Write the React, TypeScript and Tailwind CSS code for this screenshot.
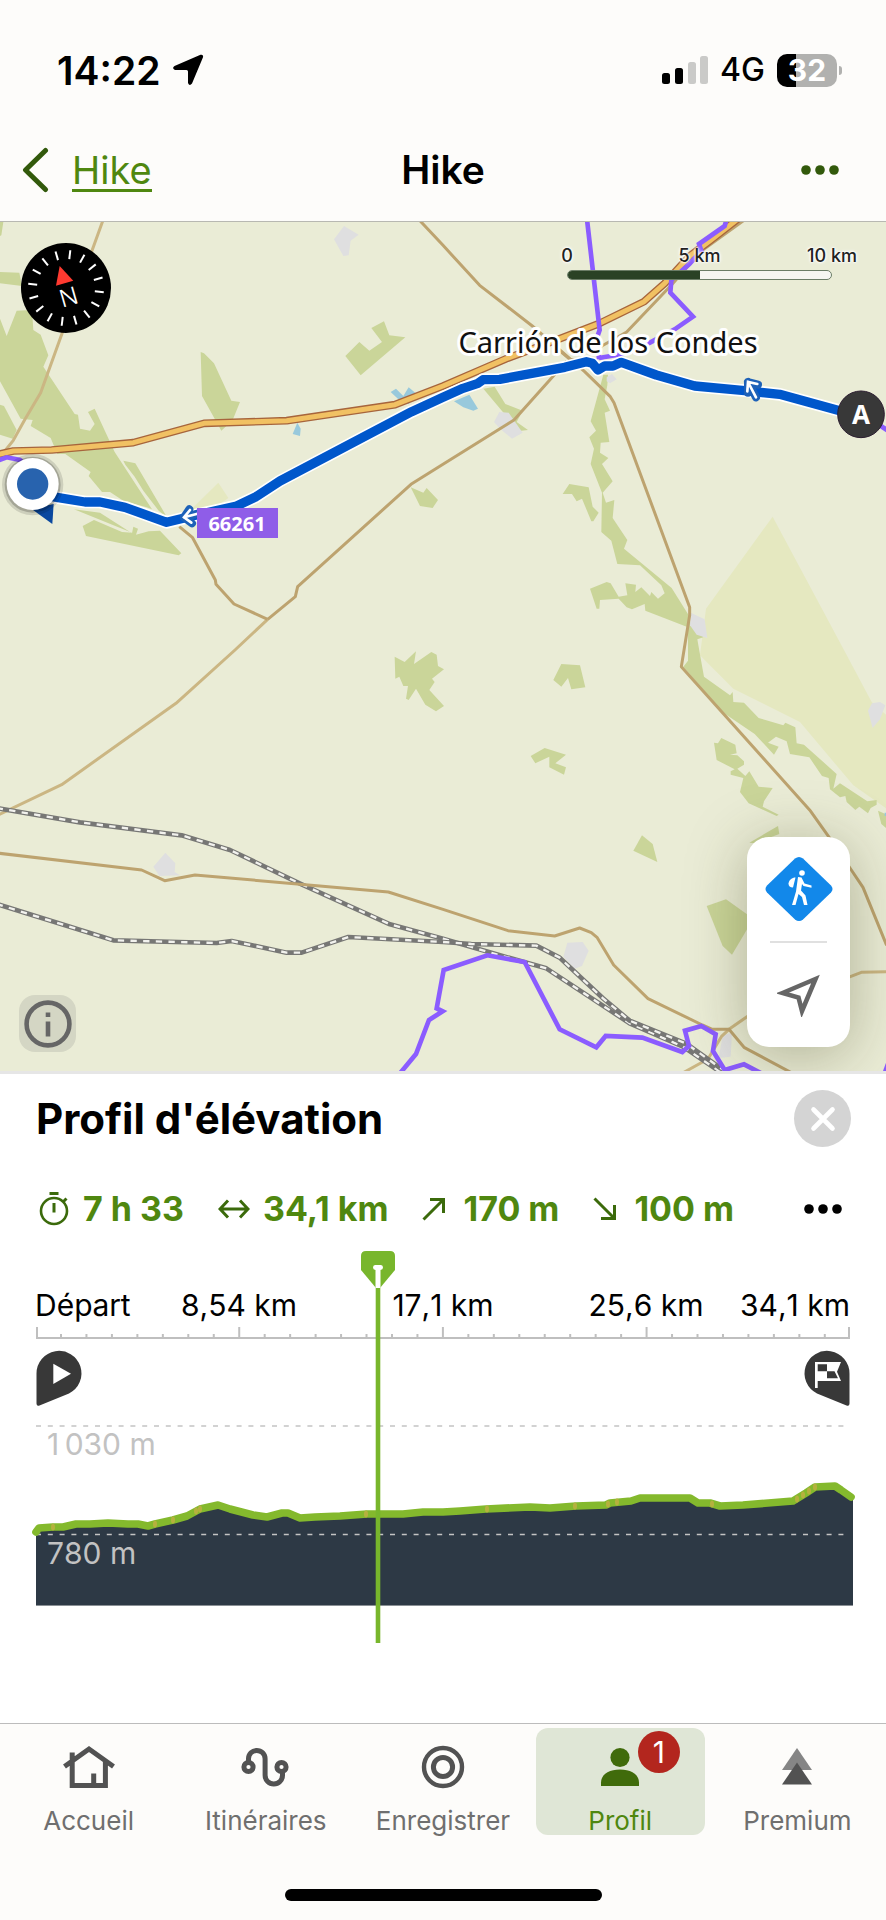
import type { ReactNode } from 'react';

interface Stat {
  label: string;
  value: string;
  icon: ReactNode;
}

interface Tab {
  label: string;
  icon: ReactNode;
  active?: boolean;
  badge?: number;
}

const STATS: Stat[] = [
  {
    label: 'Durée',
    value: '7 h 33',
    icon: (
      <svg viewBox="0 0 30 36" className="mr-[14px] h-9 w-[30px]" fill="none" stroke="#3b6a0b">
        <circle cx="15" cy="20" r="13" strokeWidth="2.6" />
        <path d="M10.500 2.600H19.500M15 12V21.500M24.500 10.500L27.500 7.500" strokeWidth="3" />
      </svg>
    ),
  },
  {
    label: 'Distance',
    value: '34,1 km',
    icon: (
      <svg viewBox="0 0 32 24" className="mr-[13px] h-6 w-8" fill="none" stroke="#3b6a0b" strokeWidth="3">
        <path d="M2 12H30M10 3.500L2 12L10 20.500M22 3.500L30 12L22 20.500" />
      </svg>
    ),
  },
  {
    label: 'Montée',
    value: '170 m',
    icon: (
      <svg viewBox="0 0 24 24" className="mr-[17px] size-6" fill="none" stroke="#3b6a0b" strokeWidth="3">
        <path d="M1.500 22.500L21.500 2.500M8 2.500H21.500V16" />
      </svg>
    ),
  },
  {
    label: 'Descente',
    value: '100 m',
    icon: (
      <svg viewBox="0 0 24 24" className="mr-[17px] size-6" fill="none" stroke="#3b6a0b" strokeWidth="3">
        <path d="M1.500 1.500L21.500 21.500M21.500 8V21.500H8" />
      </svg>
    ),
  },
];

const TABS: Tab[] = [
  {
    label: 'Accueil',
    icon: (
      <svg viewBox="0 0 52 44" className="h-11 w-[52px]" fill="none" stroke="#525252" strokeWidth="5">
        <path d="M1.500 21.500L26 4L50.500 21.500M9.200 7.500V40.500H42.400V16M30.700 40V28.500" />
      </svg>
    ),
  },
  {
    label: 'Itinéraires',
    icon: (
      <svg viewBox="0 0 52 44" className="h-11 w-[52px]" fill="none" stroke="#525252" strokeWidth="5">
        <circle cx="8.500" cy="22" r="4.600" />
        <circle cx="41.500" cy="22" r="4.600" />
        <path d="M8.500 17V13.700A8.300 8.300 0 0 1 25.100 13.700V30.300A8.700 8.700 0 0 0 42.500 30.300V27" />
      </svg>
    ),
  },
  {
    label: 'Enregistrer',
    icon: (
      <svg viewBox="0 0 52 44" className="h-11 w-[52px]" fill="none" stroke="#525252" strokeWidth="4.400">
        <circle cx="26" cy="22" r="19" />
        <circle cx="26" cy="22" r="9.600" strokeWidth="5" />
      </svg>
    ),
  },
  {
    label: 'Profil',
    active: true,
    badge: 1,
    icon: (
      <svg viewBox="0 0 52 44" className="h-11 w-[52px]" fill="#406b0b">
        <circle cx="26" cy="12.500" r="9.600" />
        <path d="M7 41V37.500C7 29.500 15 24.500 26 24.500C37 24.500 45 29.500 45 37.500V41Z" />
      </svg>
    ),
  },
  {
    label: 'Premium',
    icon: (
      <svg viewBox="0 0 52 44" className="h-11 w-[52px]">
        <path d="M26 3L41 25H11Z" fill="#858585" />
        <path d="M26 17.500L41 39.500H11Z" fill="#525252" />
      </svg>
    ),
  },
];

// Elevation samples in chart units, left to right
const PROFILE =
  '36,282 39,278 53,277 63,277 76,274 90,274 108,273 128,274 138,274 148,276 155,274 173,270 187,266 200,259 218,255 230,259 253,265 267,267 282,263 288,263 300,268 315,267 340,266 367,264 403,264 423,262 443,262 460,261 486,259 530,257 550,258 576,256 606,255 610,253 631,251 640,248 690,248 698,253 710,253 720,256 743,255 793,251 806,243 815,237 835,236 841,240 851,247';

const STEEP = [
  [53, 277],
  [155, 274],
  [173, 270],
  [196, 261],
  [200, 259],
  [366, 264],
  [487, 259],
  [575, 256],
  [608, 254],
  [617, 252],
  [712, 254],
  [797, 249],
  [803, 245],
  [809, 241],
  [815, 237],
];

const DISTANCES = [
  { x: 239, text: '8,54 km' },
  { x: 443, text: '17,1 km' },
  { x: 646, text: '25,6 km' },
];

const ROUTE =
  '100,814 175,827 255,840 300,840 375,856 500,901 590,879 710,852 765,826 840,777 1235,569 1329,526 1389,499 1434,484 1449,473 1499,472 1694,436 1759,419 1777,424 1794,444 1814,432 1839,432 1864,421 1969,459 2084,492 2234,506 2339,517 2519,566 2579,579';

const HIGHWAY =
  '-10,698 0,696 40,687 155,684 400,662 612,604 860,596 1185,548 1329,492 1519,410 1680,350 1799,304 1932,239 1994,184 2069,102 2130,56 2220,-14';

const RAILS = [
  '-10,1758 240,1801 545,1840 690,1884 905,1987 1170,2107 1329,2150 1469,2191 1639,2239 1889,2404 2049,2474 2164,2552',
  '-10,2046 340,2155 650,2163 695,2157 860,2192 905,2192 1045,2145 1329,2160 1414,2166 1609,2171 1679,2207 1809,2329 1889,2396 2059,2465 2164,2540',
];

const ROADS = [
  '1256,-8 1329,70 1439,190 1597,312 1754,449 1831,524 1842,542 2069,1156 2069,1180 2044,1334 2429,1764 2486,1844 2554,1944 2589,1996 2660,2170',
  '2236,-8 2105,86 2015,188 1880,330 1800,375 1740,378',
  '1700,418 1654,469 1542,594 1329,727 1233,787 893,1094 886,1124 803,1192',
  '538,914 577,946 646,1074 648,1087 702,1146 803,1192',
  '-10,1893 425,1944 494,1976 585,1959 1165,2010 1329,2062 1524,2126 1664,2142 1739,2118 1774,2132 1791,2146 1841,2229 1944,2330 2107,2409 2137,2422 2187,2422 2232,2476 2374,2552',
  '1684,390 1710,412 1760,420',
];

const LIGHT_ROADS = [
  '310,-8 188,329 122,512 75,592 40,655 12,690',
  '803,1192 705,1284 528,1444 185,1688 -10,1781',
  '2050,2552 2124,2511 2164,2444 2187,2422 2241,2384 2400,2320 2551,2264 2584,2251 2664,2249',
];

const TRAILS = [
  '1761,-8 1799,324 1792,344 1797,412',
  '2180,-8 2174,12 2097,66 2104,86 2068,126 2014,174 2011,212 2079,284 2024,322 1950,362 1880,394 1797,408',
  '-8,716 20,706 60,714 90,740',
  '2630,604 2664,626',
  '1200,2554 1248,2496 1287,2394 1328,2368 1310,2359 1331,2244 1462,2200 1574,2220 1679,2422 1789,2476 1817,2442 1927,2447 2047,2490 2067,2472 2055,2426 2104,2412 2147,2437 2139,2487 2174,2544 2232,2527 2284,2554',
  '2654,2554 2664,2526',
];

function MapCanvas() {
  return (
    <svg
      viewBox="0 0 886 849"
      preserveAspectRatio="xMidYMid slice"
      className="absolute inset-0 h-full w-full"
      role="img"
      aria-label="Carte de l'itinéraire"
    >
      <g transform="scale(0.33333)">
        <rect width="2660" height="2550" fill="#eaecd6" />

        {/* Farmland */}
        <g fill="#e5e8c0">
          <path d="M2318 884L2532 1284L2615 1440L2660 1480V1760L2560 1690L2400 1500L2200 1400L2100 1300L2118 1160Z" />
          <path d="M570 866L655 782L685 828L640 860Z" />
        </g>

        {/* Woods */}
        <g fill="#cad599">
          <path d="M0 0H10L4 40L0 42ZM0 150L58 152L66 192L0 184Z" />
          <path d="M0 290L20 342L50 266L96 264L100 324L122 338L145 400L130 434L224 576L234 578L240 620L270 626L284 606L264 570L284 560L344 690L456 862L440 856L372 838L330 810H306L266 762L272 750L196 696H172L152 648L92 612L98 594L62 590L0 478Z" />
          <path d="M0 548L12 552L50 624L38 650L0 638Z" />
          <path d="M370 716L406 724L500 884L476 866L430 806L404 764L376 728Z" />
          <path d="M222 862L300 872L396 934L400 914L414 920L408 938L446 928L480 926L544 994L536 1000L258 942L248 912L282 894L366 930L396 932Z" />
          <path d="M602 390L612 394L642 424L694 536L720 540L698 594L664 626L606 522Z" />
          <path d="M1036 402L1078 360L1108 386L1146 360L1114 318L1152 298L1168 340L1216 346L1082 460Z" />
          <path d="M1232 796L1270 812L1280 798L1314 834L1298 858L1260 852Z" />
          <path d="M1450 500L1484 494L1516 546L1568 566L1550 600L1584 624L1552 628L1534 600Z" />
          <path d="M1810 458H1824L1822 490L1814 532L1830 566L1814 572L1828 660L1802 662L1800 692L1825 708L1806 726L1838 778L1808 812L1818 842L1843 834L1838 888L1882 954L1872 980L2015 1098L2070 1186L2064 1216L1936 1166L1934 1146L1896 1162L1880 1156L1856 1130L1800 1134L1798 1160L1790 1160L1770 1100L1820 1080L1832 1084L1856 1124L1882 1120L1876 1084L1908 1088L1906 1110L1924 1096L1950 1122L1954 1110L1974 1130L1994 1114L1984 1090L1920 1030L1852 1026L1834 956L1804 930L1806 812L1772 726L1782 680L1768 646L1788 626L1772 598Z" />
          <path d="M1688 816L1708 786L1766 796L1778 854L1796 872L1780 898H1774L1746 830L1730 838L1716 816Z" />
          <path d="M2064 1190L2110 1246L2092 1252L2098 1286L2112 1364L2190 1420L2198 1410L2200 1440L2232 1442L2276 1488L2350 1510L2356 1502L2386 1516L2390 1564L2412 1568L2510 1656L2500 1700L2520 1684L2602 1738L2630 1734V1748L2612 1758L2604 1774L2578 1754L2566 1764L2540 1740L2536 1722L2520 1726L2490 1702L2486 1668L2466 1662L2428 1606L2370 1596L2360 1558L2328 1544L2304 1562L2336 1574L2322 1598L2264 1536L2170 1472L2050 1334L2064 1316Z" />
          <path d="M2142 1562L2154 1564L2164 1548L2206 1568L2210 1594L2190 1598L2212 1600L2232 1618V1628L2212 1640L2236 1662L2248 1648L2276 1694L2318 1698L2292 1738L2288 1754L2336 1778L2330 1782L2246 1744L2220 1710L2230 1668L2192 1658V1648L2204 1642L2150 1614Z" />
          <path d="M2248 1862L2334 1812L2338 1836L2262 1864Z" />
          <path d="M2120 2052L2178 2032L2260 2090L2196 2198L2168 2172Z" />
          <path d="M1184 1304L1214 1320L1248 1288L1242 1326L1294 1290L1310 1298L1314 1332L1332 1342L1296 1370L1304 1380L1288 1404L1332 1452L1308 1468L1276 1448L1248 1400L1226 1434L1218 1430L1224 1392H1210L1198 1364L1186 1370Z" />
          <path d="M1684 1326L1740 1330L1756 1396L1714 1402L1704 1368L1684 1394L1660 1374Z" />
          <path d="M1592 1602L1634 1578L1698 1598L1666 1624L1698 1636L1692 1658L1648 1636V1604L1606 1624Z" />
          <path d="M1926 1840L1958 1866L1972 1920L1900 1886Z" />
          <path d="M2634 1766L2660 1778V1820L2644 1806Z" />
        </g>

        {/* Built-up areas */}
        <g fill="#dfdfe0">
          <path d="M1002 52L1032 12L1076 38L1052 56L1046 100L1030 102Z" />
          <path d="M1482 600L1498 570L1526 572L1568 632L1536 650L1500 620Z" />
          <path d="M1820 466L1836 456L1850 472L1830 484L1820 478Z" />
          <path d="M2072 1172L2114 1192L2122 1248L2090 1238L2070 1210Z" />
          <path d="M460 1934L496 1892L526 1924L524 1950L540 1960L478 1962Z" />
          <path d="M1702 2162L1748 2160L1766 2186L1746 2232L1724 2240L1690 2204Z" />
          <path d="M2168 2440L2196 2432L2192 2504L2156 2508Z" />
          <path d="M2604 1466L2616 1444L2640 1440L2656 1450L2640 1492L2618 1518Z" />
        </g>

        {/* Ponds */}
        <g fill="#98c9dc">
          <path d="M1172 510L1188 500L1210 522L1226 496L1250 516L1226 546L1200 536Z" />
          <path d="M878 636L892 602L902 620L900 642Z" />
          <path d="M1362 538L1408 518L1434 560L1420 566L1390 556Z" />
          <path d="M2654 1772H2660V1782H2654Z" />
        </g>

        <g fill="none" strokeLinejoin="round">
          {LIGHT_ROADS.map((points) => (
            <polyline key={points} points={points} stroke="#cbb683" strokeWidth="9" />
          ))}
          {RAILS.map((points) => (
            <g key={points}>
              <polyline points={points} stroke="#777775" strokeWidth="14" />
              <polyline points={points} stroke="#f2f2ee" strokeWidth="7" strokeDasharray="19 19" />
            </g>
          ))}
          {ROADS.map((points) => (
            <polyline key={points} points={points} stroke="#bda36f" strokeWidth="9" />
          ))}
          <polyline points={HIGHWAY} stroke="#a7653c" strokeWidth="23" />
          <polyline points={HIGHWAY} stroke="#f1c163" strokeWidth="15" />
          {TRAILS.map((points) => (
            <polyline key={points} points={points} stroke="#8b5cff" strokeWidth="14" strokeLinejoin="miter" />
          ))}
          <polyline points={ROUTE} stroke="#ffffff" strokeWidth="38" />
          <polyline points={ROUTE} stroke="#0057cb" strokeWidth="28" />
        </g>

        {/* Direction arrows on the route */}
        <g fill="none" strokeLinecap="round">
          <path d="M552 886L604 872M568 862L552 886L576 904" stroke="#1d61b8" strokeWidth="24" strokeLinejoin="round" />
          <path d="M552 886L604 872M570 864L552 886L574 902" stroke="#ffffff" strokeWidth="8" />
          <path d="M2244 480L2268 526M2274 488L2244 480L2244 512" stroke="#1d61b8" strokeWidth="24" strokeLinejoin="round" />
          <path d="M2244 480L2268 526M2272 486L2244 480L2242 508" stroke="#ffffff" strokeWidth="8" />
        </g>

        {/* Current position */}
        <path d="M94 860L157 906L161 846Z" fill="#0a489f" />
        <circle cx="98" cy="788" r="92" fill="#000000" opacity="0.12" />
        <circle cx="98" cy="788" r="84" fill="#000000" opacity="0.2" />
        <circle cx="98" cy="786" r="78" fill="#ffffff" />
        <circle cx="98" cy="786" r="47" fill="#2863ae" />

        <circle cx="2583" cy="577" r="70" fill="#383838" stroke="#2b1d30" strokeWidth="3" />
        <rect x="591" y="858" width="243" height="90" fill="#8f5de8" />
      </g>

      <g textAnchor="middle" className="font-['Noto_Sans',sans-serif]">
        <text x="861" y="202" fontSize="26" fontWeight="700" fill="#ffffff">
          A
        </text>
        <text x="237" y="309" fontSize="20" fontWeight="700" fill="#ffffff">
          66261
        </text>
        <text
          x="608"
          y="131"
          fontSize="29"
          fill="#111111"
          stroke="#ffffff"
          strokeWidth="6"
          strokeLinejoin="round"
          paintOrder="stroke"
        >
          Carrión de los Condes
        </text>
      </g>
    </svg>
  );
}

function Compass() {
  return (
    <svg viewBox="-45 -45 90 90" className="absolute left-[21px] top-[21px] size-[90px]" role="img" aria-label="Boussole">
      <circle r="45" fill="#000000" />
      <g transform="rotate(-16)">
        {Array.from({ length: 16 }, (_, i) => (
          <path key={i} d="M0 -38V-29" stroke="#ffffff" strokeWidth="2" transform={`rotate(${i * 22.5})`} />
        ))}
        <path d="M0 -23L9 -5H-9Z" fill="#ff3a30" />
        <text y="18" textAnchor="middle" fontSize="24" fontWeight="300" fill="#ffffff" className="font-['Inter',sans-serif]">
          N
        </text>
      </g>
    </svg>
  );
}

function ScaleBar() {
  return (
    <div className="absolute right-[54px] top-[22px] w-[265px]">
      <div className="flex justify-between text-lg leading-6 font-medium text-[#222222] [text-shadow:0_0_2px_#fff,0_0_2px_#fff,0_0_3px_#fff,0_0_4px_#fff]">
        {['0', '5 km', '10 km'].map((label) => (
          <span key={label} className="flex w-0 justify-center whitespace-nowrap">
            {label}
          </span>
        ))}
      </div>
      <div className="mt-[2px] flex h-[10px] overflow-hidden rounded-full border border-[#6b7d66] bg-[#f5f6f1]">
        <div className="w-1/2 bg-[#2a4225]" />
      </div>
    </div>
  );
}

function MapControls() {
  return (
    <div className="absolute bottom-6 right-9 flex w-[103px] flex-col items-center rounded-[22px] bg-white shadow-[0_8px_60px_rgba(60,60,20,0.35)]">
      <button type="button" aria-label="Type de carte" className="flex h-[104px] w-full items-center justify-center">
        <svg viewBox="-34 -34 68 68" className="size-[68px]">
          <path
            d="M-4 -30.500Q0 -33.500 4 -30.500L32 -3.500Q35 0 32 3.500L4 30.500Q0 33.500 -4 30.500L-32 3.500Q-35 0 -32 -3.500Z"
            fill="#1288ea"
          />
          <circle cx="3" cy="-16" r="2.800" fill="#ffffff" />
          <path d="M-3.500 -11.500L-6 -1.500C-9 -1.500 -10.500 -3 -10.500 -5.500C-10 -9 -7 -11.500 -3.500 -11.500Z" fill="#ffffff" />
          <path
            d="M-1 -12L2.500 -11.500L5.500 -5.500L12.500 -3.500V-1.200L4.500 -3L3 -5L2 1.500L6.500 6.500L8.500 16H5L3 8L-0.500 5L-3.500 16H-7L-3 2.500Z"
            fill="#ffffff"
          />
        </svg>
      </button>
      <hr className="w-[57px] border-t-2 border-[#e0e0e0]" />
      <button type="button" aria-label="Me localiser" className="flex h-[104px] w-full items-center justify-center">
        <svg viewBox="0 0 44 44" className="size-11" fill="none" stroke="#666666" strokeWidth="4.600">
          <path d="M5.500 20L38.500 6L25 38L21.500 24.500Z" />
        </svg>
      </button>
    </div>
  );
}

function ElevationChart() {
  return (
    <svg
      viewBox="0 0 886 395"
      className="mt-[21px] block w-full [font-kerning:none]"
      role="img"
      aria-label="Profil d'élévation"
    >
      {/* Distance axis */}
      <g stroke="#bfbfbf" strokeWidth="2">
        <path d="M36 88H850M37 77V88M849 77V88" />
        {Array.from({ length: 31 }, (_, i) => {
          const x = 61 + i * 25.46;
          return <path key={i} d={`M${x} ${(i + 1) % 8 === 0 ? 77 : 84}V88`} />;
        })}
      </g>
      <g fontSize="30" fill="#000000">
        <text x="35" y="66">
          Départ
        </text>
        {DISTANCES.map(({ x, text }) => (
          <text key={text} x={x} y="66" textAnchor="middle">
            {text}
          </text>
        ))}
        <text x="850" y="66" textAnchor="end">
          34,1 km
        </text>
      </g>

      {/* Start and finish pins */}
      <path d="M36.500 123.700A22.500 22.500 0 1 1 69 143.500L39.500 155.500Q36.500 156.500 36.500 153.500Z" fill="#383838" />
      <path d="M53.300 113.700L71 123.700L53.300 134Z" fill="#ffffff" />
      <path d="M849.500 123.700A22.500 22.500 0 1 0 817 143.500L846.500 155.500Q849.500 156.500 849.500 153.500Z" fill="#383838" />
      <path d="M815 112H841L837 121.700L841 131H817.700V138H815Z" fill="#ffffff" />
      <path d="M817.700 114.300H827V121.300H817.700ZM827 121.300H834.500L838 128.300H827Z" fill="#383838" />

      <polygon points={`${PROFILE} 853,250 853,355 36,355`} fill="#2d3945" />
      <path d="M36 355.500H853" stroke="#8a9095" />
      <path d="M36 176H850M36 284.500H850" stroke="#c4c4c4" strokeWidth="1.600" strokeDasharray="5 6.800" />
      <g fontSize="30" fill="#c2c2c2">
        <text x="47" y="205">
          1&#8239;030 m
        </text>
        <text x="47" y="314">
          780 m
        </text>
      </g>
      <polyline
        points={PROFILE}
        fill="none"
        stroke="#84b92d"
        strokeWidth="7.600"
        strokeLinejoin="round"
        strokeLinecap="round"
      />
      {STEEP.map(([cx, cy]) => (
        <ellipse key={cx} cx={cx} cy={cy} rx="2" ry="3.600" fill="#b5b13e" />
      ))}

      {/* Cursor */}
      <path d="M378 36V393" stroke="#78b62c" strokeWidth="4.600" />
      <path d="M366 1H390Q395 1 395 6V20L380 38H376L361 20V6Q361 1 366 1Z" fill="#78b62c" />
      <path d="M375 15H381Q383 15 383 17.500Q383 19.500 380.500 20V38H375.500V20Q373 19.500 373 17.500Q373 15 375 15Z" fill="#ffffff" />
    </svg>
  );
}

function StatusBar() {
  return (
    <div className="flex h-[118px] items-center justify-between pl-[57px] pr-[44px] pt-[22px]">
      <div className="flex items-center gap-[11px]">
        <span className="text-[39px] leading-none font-semibold">14:22</span>
        <svg viewBox="0 0 32 32" className="size-8" fill="#000000">
          <path d="M28.500 0.800Q31.600 0 31 3.200L20 29.500Q17.500 32.500 16 29V17.500Q16 16 14.500 16H3Q-0.500 14.500 2.500 12Z" />
        </svg>
      </div>
      <div className="flex items-center">
        <svg viewBox="0 0 46 30" className="mr-3 h-[30px] w-[46px]">
          <rect x="0" y="18" width="8" height="11" rx="2.500" />
          <rect x="13" y="13" width="8" height="16" rx="2.500" />
          <rect x="26" y="7" width="8" height="22" rx="2.500" fill="#cacac8" />
          <rect x="38" y="1" width="8" height="28" rx="2.500" fill="#cacac8" />
        </svg>
        <span className="mr-3 text-[32px] leading-none font-medium">4G</span>
        <div className="flex h-[33px] w-[60px] items-center justify-center rounded-[10px] bg-[linear-gradient(to_right,#000_32%,#b1b1af_32%)] text-[30px] leading-none font-bold text-white">
          32
        </div>
        <div className="ml-[2px] h-[9px] w-[3px] rounded-r-full bg-[#b1b1af]" />
      </div>
    </div>
  );
}

export default function App() {
  return (
    <div className="flex min-h-screen flex-col bg-white font-['Inter',sans-serif] text-black">
      <header className="border-b border-[#b8b8b2] bg-[#fdfcfa]">
        <StatusBar />
        <div className="grid h-[103px] grid-cols-3 items-center pl-[20px] pr-[46px]">
          <a href="#" className="flex items-center gap-[22px] text-[38px] leading-none text-[#4f870f]">
            <svg viewBox="0 0 30 46" className="h-[46px] w-[30px]" fill="none" stroke="#32590b" strokeWidth="5" strokeLinecap="round" strokeLinejoin="round">
              <path d="M25.500 3.500L5.500 23L25.500 42.500" />
            </svg>
            <span className="border-b-[3px] border-[#4f870f] pt-1">Hike</span>
          </a>
          <h1 className="pl-[26px] text-center text-[39px] leading-none font-semibold">Hike</h1>
          <button type="button" aria-label="Plus d'options" className="justify-self-end">
            <svg viewBox="0 0 40 12" className="h-3 w-10" fill="#32590b">
              <circle cx="6" cy="6" r="4.800" />
              <circle cx="20" cy="6" r="4.800" />
              <circle cx="34" cy="6" r="4.800" />
            </svg>
          </button>
        </div>
      </header>

      <main className="flex flex-1 flex-col">
        <section className="relative min-h-[480px] flex-1 overflow-hidden bg-[#eaecd6]">
          <MapCanvas />
          <Compass />
          <ScaleBar />
          <button
            type="button"
            aria-label="Informations sur la carte"
            className="absolute bottom-[19px] left-[19px] flex size-[57px] items-center justify-center rounded-2xl bg-[#d4d6c4]"
          >
            <svg viewBox="0 0 48 48" className="size-12">
              <circle cx="24" cy="24" r="21.400" fill="none" stroke="#666666" strokeWidth="4.600" />
              <path d="M21.700 12.500H26.300V17H21.700ZM21.700 21.500H26.300V36.500H21.700Z" fill="#666666" />
            </svg>
          </button>
          <MapControls />
        </section>

        <section className="border-t-[3px] border-[#e6e6e6] pt-4 pb-[78px]">
          <div className="flex h-[57px] items-center justify-between pl-9 pr-[35px]">
            <h2 className="text-[42px] leading-none font-bold">Profil d'élévation</h2>
            <button type="button" aria-label="Fermer" className="flex size-[57px] items-center justify-center rounded-full bg-[#d4d4d4]">
              <svg viewBox="0 0 28 28" className="size-7" fill="none" stroke="#ffffff" strokeWidth="4.600" strokeLinecap="round">
                <path d="M4.500 4.500L23.500 23.500M23.500 4.500L4.500 23.500" />
              </svg>
            </button>
          </div>

          <div className="mt-[42px] flex h-10 items-center justify-between pl-[39px] pr-[43px]">
            <ul className="flex gap-[34px] text-[34px] leading-10 font-bold text-[#4f870f]">
              {STATS.map(({ label, value, icon }) => (
                <li key={label} title={label} className="flex items-center whitespace-nowrap">
                  {icon}
                  {value}
                </li>
              ))}
            </ul>
            <button type="button" aria-label="Options du profil">
              <svg viewBox="0 0 40 12" className="h-3 w-10" fill="#000000">
                <circle cx="6" cy="6" r="4.800" />
                <circle cx="20" cy="6" r="4.800" />
                <circle cx="34" cy="6" r="4.800" />
              </svg>
            </button>
          </div>

          <ElevationChart />
        </section>
      </main>

      <footer className="h-[197px] border-t border-[#bcbcbc] bg-[#fdfcfa]">
        <nav className="grid grid-cols-5 pt-1">
          {TABS.map(({ label, icon, active, badge }) => (
            <a
              key={label}
              href="#"
              aria-current={active ? 'page' : undefined}
              className={`relative mx-1 flex h-[107px] flex-col items-center rounded-xl pt-[17px] text-[26px] leading-7 ${
                active ? 'bg-[#dfe6d6] text-[#4f870f]' : 'text-[#6f6f6f]'
              }`}
            >
              {icon}
              <span className="mt-[18px]">{label}</span>
              {badge && (
                <span className="absolute right-[25px] top-[3px] flex size-[42px] items-center justify-center rounded-full bg-[#b3261e] text-[30px] leading-none text-white">
                  {badge}
                </span>
              )}
            </a>
          ))}
        </nav>
        <div className="mx-auto mt-[54px] h-3 w-[317px] rounded-full bg-black" />
      </footer>
    </div>
  );
}
